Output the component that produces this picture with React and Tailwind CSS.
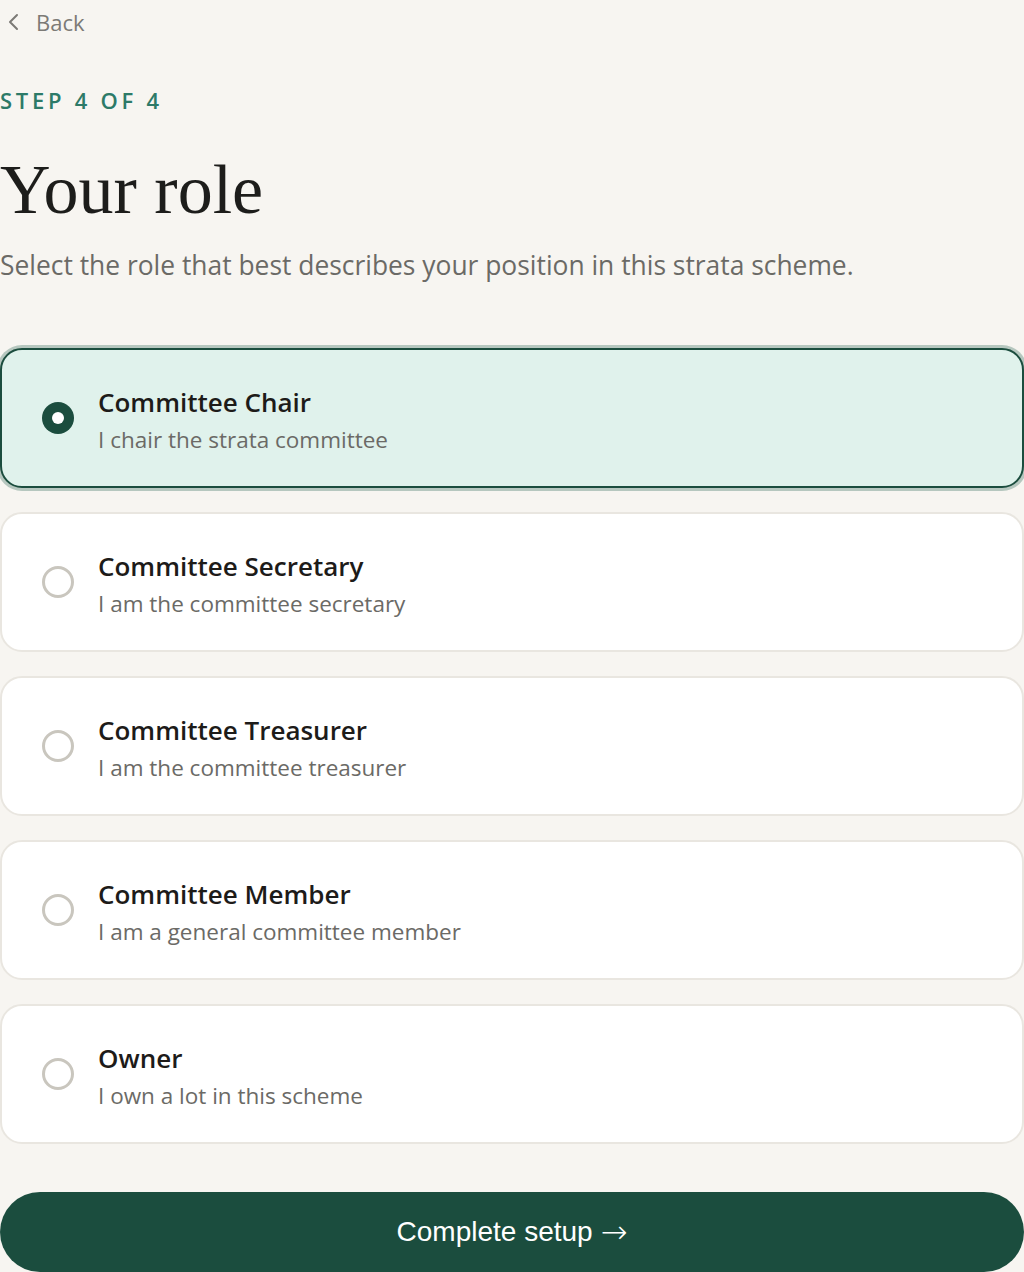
import React, { useState } from 'react';

const ROLES = [
  { id: 'chair', title: 'Committee Chair', desc: 'I chair the strata committee' },
  { id: 'secretary', title: 'Committee Secretary', desc: 'I am the committee secretary' },
  { id: 'treasurer', title: 'Committee Treasurer', desc: 'I am the committee treasurer' },
  { id: 'member', title: 'Committee Member', desc: 'I am a general committee member' },
  { id: 'owner', title: 'Owner', desc: 'I own a lot in this scheme' },
];

export default function App() {
  const [role, setRole] = useState('chair');

  return (
    <div className="min-h-screen bg-[#f7f5f1] font-['Open_Sans',sans-serif]">
      {/* Back link */}
      <button className="flex items-center gap-[14px] pl-[6px] pt-[6px] text-[22px] leading-[32px] text-[#7c7a76]">
        <svg width="16" height="18" viewBox="0 0 16 18" fill="none" stroke="currentColor" strokeWidth="2" strokeLinecap="round" strokeLinejoin="round">
          <path d="M11 2 L4 9 L11 16" />
        </svg>
        Back
      </button>

      <p className="mt-[47px] text-[22px] leading-[30px] font-semibold tracking-[0.17em] text-[#2d7a68]">
        STEP 4 OF 4
      </p>

      <h1 className="mt-[36px] font-['Liberation_Serif',serif] text-[70px] leading-[78px] text-[#1d1d1b]">
        Your role
      </h1>

      <p className="mt-[18px] text-[26.4px] leading-[36px] text-[#6b6a66]">
        Select the role that best describes your position in this strata scheme.
      </p>

      {/* Role options */}
      <div className="mt-[65px] flex flex-col gap-[24px]">
        {ROLES.map((r) => {
          const selected = role === r.id;
          return (
            <button
              key={r.id}
              onClick={() => setRole(r.id)}
              className={`flex h-[140px] items-center gap-[24px] rounded-[22px] border-2 pl-[40px] text-left ${
                selected
                  ? 'border-[#1b4d3e] bg-[#e0f2ec] ring-[3px] ring-[#b6c7bf]'
                  : 'border-[#e9e6e0] bg-white'
              }`}
            >
              {selected ? (
                <span className="flex h-[32px] w-[32px] shrink-0 items-center justify-center rounded-full bg-[#1b4d3e]">
                  <span className="h-[12px] w-[12px] rounded-full bg-white" />
                </span>
              ) : (
                <span className="h-[32px] w-[32px] shrink-0 rounded-full border-[3px] border-[#c9c6be]" />
              )}
              <span className="flex flex-col pt-[5px]">
                <span className="text-[26px] leading-[36px] font-semibold text-[#1d1b19]">{r.title}</span>
                <span className="mt-[3px] text-[22.5px] leading-[34px] text-[#6b6a66]">{r.desc}</span>
              </span>
            </button>
          );
        })}
      </div>

      <button className="mt-[48px] flex h-[80px] w-full items-center justify-center gap-[8px] rounded-full bg-[#1b4d3e] font-['Liberation_Sans',sans-serif] text-[28px] text-white">
        Complete setup
        <span className="font-['DejaVu_Sans',sans-serif] text-[32px] font-light">→</span>
      </button>
    </div>
  );
}
